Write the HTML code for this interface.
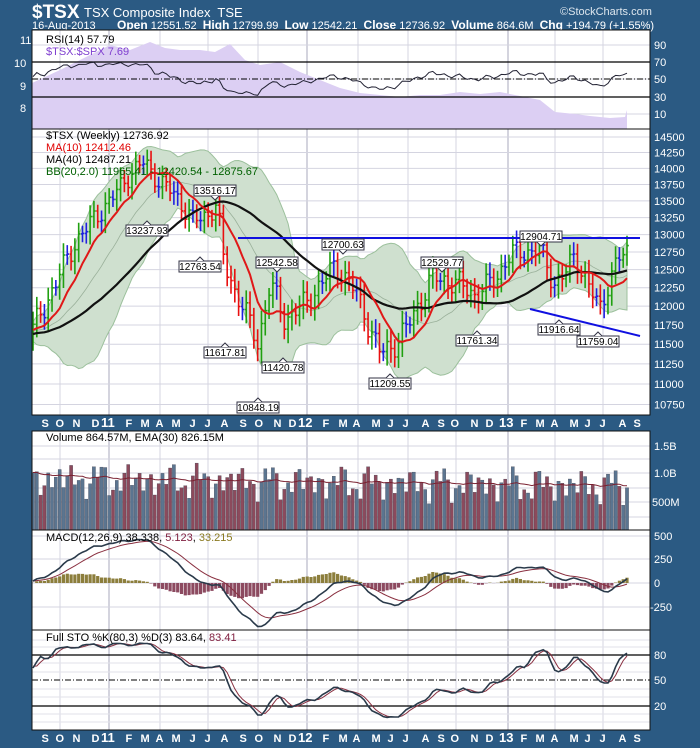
<!DOCTYPE html>
<html><head><meta charset="utf-8">
<style>
html,body{margin:0;padding:0;background:#2b5a83;}
body{width:700px;height:748px;overflow:hidden;position:relative;font-family:"Liberation Sans",sans-serif;}
#c{position:absolute;left:0;top:0;}
.t{position:absolute;color:#fff;white-space:nowrap;}
</style></head><body>
<div class="t" style="left:32px;top:2px;font-size:19px;font-weight:bold;">$TSX</div>
<div class="t" style="left:84px;top:5px;font-size:13px;">TSX Composite Index&nbsp; TSE</div>
<div class="t" style="left:560px;top:6px;font-size:11px;color:#dde6ee;">©StockCharts.com</div>
<div class="t" style="left:32px;top:20px;font-size:11px;">16-Aug-2013</div>
<div class="t" style="left:117px;top:18px;font-size:11px;"><b style="font-size:12px">Open</b> 12551.52 &nbsp;<b style="font-size:12px">High</b> 12799.99 &nbsp;<b style="font-size:12px">Low</b> 12542.21 &nbsp;<b style="font-size:12px">Close</b> 12736.92 &nbsp;<b style="font-size:12px">Volume</b> 864.6M &nbsp;<b style="font-size:12px">Chg</b> +194.79 (+1.55%)</div>
<svg id="c" width="700" height="748" xmlns="http://www.w3.org/2000/svg" font-family="Liberation Sans, sans-serif">
<g id="g"></g>
<g font-size="11" fill="#fff">
<text x="20" y="44">11</text><text x="14" y="67">10</text><text x="20" y="90">9</text><text x="20" y="112">8</text>
<text x="654" y="49">90</text><text x="654" y="66">70</text><text x="654" y="83">50</text><text x="654" y="101">30</text><text x="654" y="118">10</text>
</g>
<g font-size="11" fill="#fff" id="pax"></g>
<g font-size="11" fill="#fff">
<text x="654" y="450">1.5B</text><text x="654" y="477">1.0B</text><text x="652" y="506">500M</text>
<text x="654" y="540">500</text><text x="654" y="563">250</text><text x="654" y="587">0</text><text x="650" y="611">-250</text>
<text x="654" y="659">80</text><text x="654" y="684">50</text><text x="654" y="710">20</text>
</g>
<g font-size="11" fill="#000">
<text x="46" y="43">RSI(14) 57.79</text>
<text x="46" y="55" fill="#8040d0">$TSX:$SPX 7.69</text>
<text x="46" y="139">$TSX (Weekly) 12736.92</text>
<text x="46" y="151" fill="#e00000">MA(10) 12412.46</text>
<text x="46" y="163">MA(40) 12487.21</text>
<text x="46" y="175" fill="#006000">BB(20,2.0) 11965.41 - 12420.54 - 12875.67</text>
<text x="46" y="441">Volume 864.57M, EMA(30) 826.15M</text>
<text x="46" y="541">MACD(12,26,9) 38.338, <tspan fill="#802040">5.123</tspan>, <tspan fill="#8a7a20">33.215</tspan></text>
<text x="46" y="641">Full STO %K(80,3) %D(3) 83.64, <tspan fill="#802040">83.41</tspan></text>
</g>
<g id="ann" font-size="10"></g>
<g id="xl" font-size="11" fill="#fff" font-weight="bold"></g>
</svg>
<script>
const L=32,R=650;
let s='';
function ln(x1,y1,x2,y2,c,w,d){s+=`<line x1="${x1}" y1="${y1}" x2="${x2}" y2="${y2}" stroke="${c}" stroke-width="${w||1}"${d?` stroke-dasharray="${d}"`:''}/>`;}
function path(pts,c,w,fill){s+=`<path d="M${pts.map(p=>p[0].toFixed(1)+','+p[1].toFixed(1)).join('L')}" stroke="${c}" stroke-width="${w}" fill="${fill||'none'}"/>`;}
const panels=[[30,129],[129,415],[431,530],[530,630],[630,730]];
panels.forEach(p=>{s+=`<rect x="${L}" y="${p[0]}" width="${R-L}" height="${p[1]-p[0]}" fill="#fff"/>`;});
const months=[['S',45],['O',59],['N',76],['D',95],['11',108],['F',129],['M',144],['A',159],['M',175],['J',193],['J',208],['A',224],['S',243],['O',258],['N',277],['D',292],['12',305],['F',326],['M',342],['A',356],['M',375],['J',391],['J',406],['A',425],['S',441],['O',454],['N',474],['D',489],['13',506],['F',524],['M',539],['A',554],['M',573],['J',588],['J',603],['A',622],['S',637]];
const gx=[60,109,160,208,258,307,358,408,456,508,555,603];
panels.forEach(p=>{gx.forEach(x=>{const yr=(x==109||x==307||x==508);ln(x,p[0],x,p[1],yr?'#a8a8bc':'#d4d4e0',1);});});
const py=p=>137+(Math.log(14500)-Math.log(p))*894;
for(let p=10750;p<=14500;p+=250){const y=py(p);ln(L,y,R,y,'#d4d4e0');}
[45,62,79,97,114].forEach(y=>ln(L,y,R,y,'#d4d4e0'));
[446,473,502,517,488,459].forEach(y=>ln(L,y,R,y,'#d4d4e0'));
[536,559,583,607].forEach(y=>ln(L,y,R,y,'#d4d4e0'));
[640,647,663,672,689,697,714,722].forEach(y=>ln(L,y,R,y,'#e2e2ea'));
let pax='';for(let p=10750;p<=14500;p+=250){pax+=`<text x="654" y="${(py(p)+4).toFixed(1)}">${p}</text>`;}
document.getElementById('pax').innerHTML=pax;
let xl='';months.forEach(m=>{const w=m[0].length>1?7:3.5;xl+=`<text x="${m[1]-w}" y="427" ${m[0].length>1?'font-size="13"':''}>${m[0]}</text><text x="${m[1]-w}" y="742" ${m[0].length>1?'font-size="13"':''}>${m[0]}</text>`;});
document.getElementById('xl').innerHTML=xl;
const ra=[[32,83],[60,70],[90,55],[110,45],[130,50],[150,42],[165,48],[180,50],[200,50],[215,52],[230,44],[245,60],[260,65],[280,62],[300,72],[320,80],[340,88],[360,93],[380,95],[400,97],[420,95],[440,95],[460,92],[480,94],[500,92],[520,96],[540,100],[555,112],[575,114],[590,116],[610,118],[625,117],[627,110]];
s+=`<path d="M32,129L${ra.map(p=>p.join(',')).join('L')}L627,129Z" fill="#dccff3"/>`;
const an=[[33,11700],[45,12000],[60,12450],[76,12900],[95,13250],[110,13500],[129,13900],[144,14100],[159,13800],[175,13600],[193,13200],[208,13300],[217,13450],[224,12600],[235,12200],[243,12000],[258,11500],[270,12300],[277,12100],[285,11800],[295,11950],[307,12050],[320,12300],[335,12550],[345,12400],[356,12200],[370,11700],[380,11400],[391,11450],[406,11700],[420,12050],[432,12400],[445,12350],[460,12300],[475,12150],[485,12250],[497,12400],[507,12650],[515,12750],[530,12750],[540,12800],[554,12300],[565,12450],[575,12700],[588,12300],[600,11950],[608,12300],[618,12650],[627,12737]];
function interp(x){for(let i=1;i<an.length;i++){if(x<=an[i][0]){const a=an[i-1],b=an[i];return a[1]+(b[1]-a[1])*(x-a[0])/(b[0]-a[0]);}}return an[an.length-1][1];}
const N=157,P=80;const X=[],C=[],O=[],H=[],Lo=[];
for(let i=-P;i<N;i++){let c;const x=33+i*(594/156);
 if(i<0)c=11450+(i+P)*3+90*Math.sin(i*1.3);else c=interp(x)+110*Math.sin(i*1.7)+70*Math.sin(i*0.9+1);
 X.push(x);C.push(c);}
for(let k=0;k<C.length;k++){O.push(k?C[k-1]:C[k]);const m=90+80*Math.abs(Math.sin(k*2.3));H.push(Math.max(O[k],C[k])+m);Lo.push(Math.min(O[k],C[k])-m*1.1);}
const ma=n=>C.map((v,k)=>{let a=0,c=0;for(let j=Math.max(0,k-n+1);j<=k;j++){a+=C[j];c++;}return a/c;});
const m10=ma(10),m40=ma(40),m20=ma(20);
const sd=C.map((v,k)=>{let a=0,c=0;for(let j=Math.max(0,k-19);j<=k;j++){a+=(C[j]-m20[k])**2;c++;}return Math.sqrt(a/c);});
const R0=P;const rng=[...Array(N).keys()].map(i=>i+R0);
const up=rng.map(k=>[X[k],py(m20[k]+2*sd[k])]),dn=rng.map(k=>[X[k],py(m20[k]-2*sd[k])]).reverse();
s+=`<path d="M${up.concat(dn).map(p=>p[0].toFixed(1)+','+p[1].toFixed(1)).join('L')}Z" fill="#cfe0cf" stroke="#9cc09c" stroke-width="1"/>`;
path(rng.map(k=>[X[k],py(m20[k])]),'#9ab09a',0.8);
rng.forEach(k=>{const d=C[k]-O[k];const col=Math.abs(d)<45?'#2020e0':(d>0?'#20a010':'#e81010');const x=X[k];
 s+=`<path d="M${x},${py(H[k]).toFixed(1)}V${py(Lo[k]).toFixed(1)}M${x-1.5},${py(O[k]).toFixed(1)}H${x}M${x},${py(C[k]).toFixed(1)}H${x+1.8}" stroke="${col}" stroke-width="1.6" fill="none"/>`;});
path(rng.map(k=>[X[k],py(m40[k])]),'#111',2.2);
path(rng.map(k=>[X[k],py(m10[k])]),'#e01818',2);
ln(238,238,640,238,'#1010e0',2);ln(530,309,640,336,'#1010e0',2);
let ag=0,al=0;const rsi=[];for(let k=1;k<C.length;k++){const d=C[k]-C[k-1];ag=(ag*13+Math.max(d,0))/14;al=(al*13+Math.max(-d,0))/14;rsi[k]=100-100/(1+ag/(al||1));}
ln(L,62,R,62,'#000',1.2);ln(L,97,R,97,'#000',1.2);ln(L,79,R,79,'#000',1,'6,2,1,2');
path(rng.map(k=>[X[k],Math.max(32,Math.min(127,79.5-(rsi[k]-50)*0.8625*0.6))]),'#223',1);
const vv=[];rng.forEach(k=>{const i=k-R0;let v=0.9+0.18*Math.sin(i*2.1)+0.12*Math.sin(i*0.7+2)+0.1*Math.sin(i*5.3)-i*0.0008;vv.push(v);
 const col=C[k]>=O[k]?'#5b7590':'#8c4a5c';const y=531-v*58;s+=`<rect x="${(X[k]-1.6).toFixed(1)}" y="${y.toFixed(1)}" width="3.2" height="${(530-y).toFixed(1)}" fill="${col}" stroke="#3a3a4a" stroke-width="0.3"/>`;});
let e=vv[0];path(vv.map((v,i)=>{e=e+(v-e)*2/31;return [X[i+R0],531-e*58];}),'#7a2030',1);
let e12=C[0],e26=C[0],sg=0;const mc=[],sgl=[];C.forEach((c,k)=>{e12+=(c-e12)*2/13;e26+=(c-e26)*2/27;const m=e12-e26;sg+=(m-sg)*2/10;mc.push(m);sgl.push(sg);});
const my=v=>Math.max(531,Math.min(629,583-v*0.094));
rng.forEach(k=>{const h=mc[k]-sgl[k];const y=my(h);s+=`<rect x="${(X[k]-1.6).toFixed(1)}" y="${Math.min(y,583).toFixed(1)}" width="3.2" height="${Math.abs(y-583).toFixed(1)}" fill="${h>0?'#8c7e3c':'#8c4a60'}"/>`;});
path(rng.map(k=>[X[k],my(sgl[k])]),'#8a3040',1);
path(rng.map(k=>[X[k],my(mc[k])]),'#2a3a4a',1.6);
const rk=C.map((c,k)=>{let hi=-1e9,lo=1e9;for(let j=Math.max(0,k-79);j<=k;j++){hi=Math.max(hi,H[j]);lo=Math.min(lo,Lo[j]);}return 100*(c-lo)/(hi-lo||1);});
const K=rk.map((v,k)=>(rk[k]+(rk[k-1]??v)+(rk[k-2]??v))/3);const D=K.map((v,k)=>(K[k]+(K[k-1]??v)+(K[k-2]??v))/3);
ln(L,655,R,655,'#000',1.2);ln(L,706,R,706,'#000',1.2);ln(L,680,R,680,'#000',1,'6,2,1,2');
const sy=v=>Math.max(632,Math.min(728,723-v*0.85));
path(rng.map(k=>[X[k],sy(D[k])]),'#8a3040',1);
path(rng.map(k=>[X[k],sy(K[k])]),'#2a3a4a',1.6);
panels.forEach(p=>{s+=`<rect x="${L}" y="${p[0]}" width="${R-L}" height="${p[1]-p[0]}" fill="none" stroke="#111" stroke-width="1"/>`;});
document.getElementById('g').innerHTML=s;
const A=[['13237.93',147,225,1],['12763.54',200,261,1],['13516.17',215,185,0],['11617.81',225,347,1],['11420.78',283,362,1],['10848.19',258,402,1],['12542.58',277,257,0],['12700.63',343,239,0],['12529.77',442,257,0],['12904.71',541,231,0],['11761.34',477,335,1],['11209.55',390,378,1],['11916.64',559,324,1],['11759.04',598,336,1]];
let a='';A.forEach(t=>{const w=42,x=t[1]-w/2,y=t[2];a+=`<rect x="${x}" y="${y}" width="${w}" height="11" fill="#fff" stroke="#334" stroke-width="1"/>`;
 a+= t[3]?`<path d="M${t[1]-4},${y}L${t[1]},${y-4}L${t[1]+4},${y}" fill="#fff" stroke="#334"/>`:`<path d="M${t[1]-4},${y+11}L${t[1]},${y+15}L${t[1]+4},${y+11}" fill="#fff" stroke="#334"/>`;
 a+=`<text x="${t[1]}" y="${y+9}" text-anchor="middle" fill="#000">${t[0]}</text>`;});
document.getElementById('ann').innerHTML=a;
</script>
</body></html>
